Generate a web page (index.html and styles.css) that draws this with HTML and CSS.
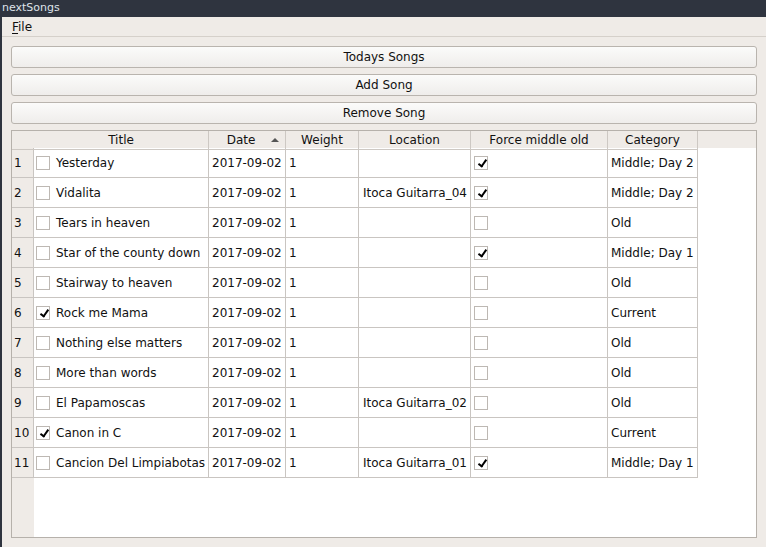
FILE: index.html
```html
<!DOCTYPE html>
<html>
<head>
<meta charset="utf-8">
<link rel="stylesheet" href="styles.css">
</head>
<body>
<div class="window">
  <div class="titlebar">nextSongs</div>
  <div class="frame">
    <div class="menubar"><span class="menu"><u>F</u>ile</span></div>
    <div class="content">
      <button class="btn">Todays Songs</button>
      <button class="btn">Add Song</button>
      <button class="btn">Remove Song</button>
      <div class="table">
        <div class="hrow">
          <div class="hcell corner"></div>
          <div class="hcell">Title</div>
          <div class="hcell sorted">Date<span class="arrow"></span></div>
          <div class="hcell">Weight</div>
          <div class="hcell">Location</div>
          <div class="hcell">Force middle old</div>
          <div class="hcell">Category</div>
          <div class="hfill"></div>
        </div>
        <div class="row"><div class="vh">1</div><div class="c ct"><span class="cb"></span>Yesterday</div><div class="c">2017-09-02</div><div class="c">1</div><div class="c cl"></div><div class="c cf"><span class="cb on"></span></div><div class="c">Middle; Day 2</div></div>
        <div class="row"><div class="vh">2</div><div class="c ct"><span class="cb"></span>Vidalita</div><div class="c">2017-09-02</div><div class="c">1</div><div class="c cl">Itoca Guitarra_04</div><div class="c cf"><span class="cb on"></span></div><div class="c">Middle; Day 2</div></div>
        <div class="row"><div class="vh">3</div><div class="c ct"><span class="cb"></span>Tears in heaven</div><div class="c">2017-09-02</div><div class="c">1</div><div class="c cl"></div><div class="c cf"><span class="cb"></span></div><div class="c">Old</div></div>
        <div class="row"><div class="vh">4</div><div class="c ct"><span class="cb"></span>Star of the county down</div><div class="c">2017-09-02</div><div class="c">1</div><div class="c cl"></div><div class="c cf"><span class="cb on"></span></div><div class="c">Middle; Day 1</div></div>
        <div class="row"><div class="vh">5</div><div class="c ct"><span class="cb"></span>Stairway to heaven</div><div class="c">2017-09-02</div><div class="c">1</div><div class="c cl"></div><div class="c cf"><span class="cb"></span></div><div class="c">Old</div></div>
        <div class="row"><div class="vh">6</div><div class="c ct"><span class="cb on"></span>Rock me Mama</div><div class="c">2017-09-02</div><div class="c">1</div><div class="c cl"></div><div class="c cf"><span class="cb"></span></div><div class="c">Current</div></div>
        <div class="row"><div class="vh">7</div><div class="c ct"><span class="cb"></span>Nothing else matters</div><div class="c">2017-09-02</div><div class="c">1</div><div class="c cl"></div><div class="c cf"><span class="cb"></span></div><div class="c">Old</div></div>
        <div class="row"><div class="vh">8</div><div class="c ct"><span class="cb"></span>More than words</div><div class="c">2017-09-02</div><div class="c">1</div><div class="c cl"></div><div class="c cf"><span class="cb"></span></div><div class="c">Old</div></div>
        <div class="row"><div class="vh">9</div><div class="c ct"><span class="cb"></span>El Papamoscas</div><div class="c">2017-09-02</div><div class="c">1</div><div class="c cl">Itoca Guitarra_02</div><div class="c cf"><span class="cb"></span></div><div class="c">Old</div></div>
        <div class="row"><div class="vh">10</div><div class="c ct"><span class="cb on"></span>Canon in C</div><div class="c">2017-09-02</div><div class="c">1</div><div class="c cl"></div><div class="c cf"><span class="cb"></span></div><div class="c">Current</div></div>
        <div class="row"><div class="vh">11</div><div class="c ct"><span class="cb"></span>Cancion Del Limpiabotas</div><div class="c">2017-09-02</div><div class="c">1</div><div class="c cl">Itoca Guitarra_01</div><div class="c cf"><span class="cb on"></span></div><div class="c">Middle; Day 1</div></div>
      </div>
    </div>
  </div>
</div>
</body>
</html>
```

FILE: styles.css
```css
* { box-sizing: border-box; }
html, body { margin: 0; padding: 0; }
body {
  width: 766px;
  height: 547px;
  overflow: hidden;
  background: #efebe7;
  font-family: "DejaVu Sans", sans-serif;
  font-size: 12px;
  color: #111;
}
.window { display: flex; flex-direction: column; height: 547px; }
.titlebar {
  height: 17px;
  background: #2f343f;
  color: #dfe3ea;
  font-size: 11px;
  line-height: 16px;
  padding-left: 2px;
  flex: none;
}
.frame {
  flex: 1;
  border-left: 2px solid #2f343f;
  display: flex;
  flex-direction: column;
}
.menubar {
  height: 20px;
  border-bottom: 1px solid #d5d0ca;
  padding-left: 10px;
  padding-top: 2px;
  line-height: 17px;
  flex: none;
}
.menu u { text-decoration: underline; text-underline-offset: 2px; }
.content {
  padding: 9px 9px 0 9px;
  display: flex;
  flex-direction: column;
  gap: 6px;
}
.btn {
  display: block;
  width: 746px;
  height: 22px;
  margin: 0;
  border: 1px solid #b9b4ae;
  border-radius: 3px;
  background: linear-gradient(#fbfbfa, #efedeb);
  font-family: "DejaVu Sans", sans-serif;
  font-size: 12px;
  color: #111;
  padding: 0;
  line-height: 20px;
}
.table {
  width: 746px;
  height: 408px;
  border: 1px solid #b6b1ab;
  background: linear-gradient(to right, #efebe7 22px, #ffffff 22px);
}
.hrow, .row {
  display: grid;
  grid-template-columns: 22px 175px 77px 73px 112px 137px 90px 1fr;
}
.hrow { height: 17px; background: #efebe7; }
.hcell {
  border-right: 1px solid #cdc8c3;
  border-bottom: 1px solid #cdc8c3;
  text-align: center;
  line-height: 18px;
  position: relative;
}
.hcell.corner { border-right: none; }
.sorted { padding-right: 12px; }
.arrow {
  position: absolute;
  right: 6px;
  top: 7px;
  width: 0; height: 0;
  border-left: 4px solid transparent;
  border-right: 4px solid transparent;
  border-bottom: 4px solid #555;
}
.row { height: 30px; }
.row > div {
  border-right: 1px solid #c9c5c1;
  border-bottom: 1px solid #c9c5c1;
  padding-top: 1px;
  white-space: nowrap;
  overflow: hidden;
  display: flex;
  align-items: center;
}
.row > .vh {
  background: #efebe7;
  padding-left: 2px;
}
.c { padding-left: 3px; }
.cl { padding-left: 4px; }
.ct { padding-left: 2px; }
.ct .cb { margin-right: 6px; }
.cb {
  display: inline-block;
  width: 14px;
  height: 14px;
  border: 1px solid #bdb8b3;
  background: #fff;
  position: relative;
  flex: none;
}
.cb.on::after {
  content: "";
  position: absolute;
  width: 3px;
  height: 7px;
  border-right: 2px solid #000;
  border-bottom: 2px solid #000;
  transform: rotate(35deg);
  left: 5px;
  top: 1px;
}
```
